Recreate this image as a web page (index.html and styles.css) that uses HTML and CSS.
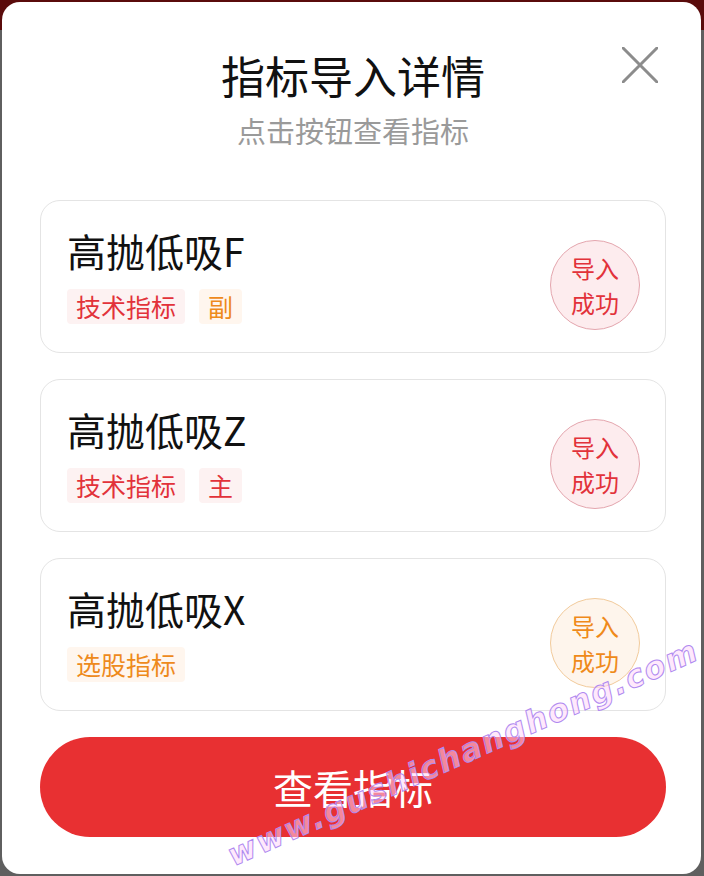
FILE: index.html
```html
<!DOCTYPE html>
<html lang="zh-CN">
<head>
  <meta charset="UTF-8" />
  <meta name="viewport" content="width=device-width, initial-scale=1.0"/>
  <title>指标导入详情</title>
  <link rel="stylesheet" href="styles.css">
</head>
<body>

  <div class="dialog">
    <button class="close" aria-label="关闭">
      <svg width="36" height="36" viewBox="0 0 36 36">
        <path d="M1 1 L35 35 M35 1 L1 35" stroke="#8c8c8c" stroke-width="3" stroke-linecap="round" fill="none"/>
      </svg>
    </button>

    <h1 class="title">指标导入详情</h1>
    <p class="subtitle">点击按钮查看指标</p>

    <!-- imported indicators -->
    <div class="list">
      <div class="card">
        <div class="info">
          <div class="name">高抛低吸F</div>
          <div class="tags">
            <span class="tag red">技术指标</span>
            <span class="tag orange">副</span>
          </div>
        </div>
        <div class="badge red">导入<br>成功</div>
      </div>

      <div class="card">
        <div class="info">
          <div class="name">高抛低吸Z</div>
          <div class="tags">
            <span class="tag red">技术指标</span>
            <span class="tag red">主</span>
          </div>
        </div>
        <div class="badge red">导入<br>成功</div>
      </div>

      <div class="card">
        <div class="info">
          <div class="name">高抛低吸X</div>
          <div class="tags">
            <span class="tag orange">选股指标</span>
          </div>
        </div>
        <div class="badge orange">导入<br>成功</div>
      </div>
    </div>

    <button class="view">查看指标</button>

    <span class="mark">www.gushichanghong.com</span>
  </div>

</body>
</html>
```

FILE: styles.css
```css
body {
  margin: 0;
  padding: 2px 3px 2px 2px;
  background: linear-gradient(#5a0b0b 0, #5a0b0b 30px, #5f5f5f 30px);
  font-family: "Noto Sans CJK SC", "Noto Sans", sans-serif;
}
.dialog {
  position: relative;
  box-sizing: border-box;
  height: 872px;
  background: #fff;
  border-radius: 18px;
  padding: 46px 35px 37px 38px;
}
.close {
  position: absolute;
  top: 45px;
  right: 43px;
  width: 36px;
  height: 36px;
  padding: 0;
  border: none;
  background: none;
}
.close svg {
  display: block;
}
.title {
  margin: 0;
  text-align: center;
  font-size: 44px;
  line-height: 54px;
  font-weight: 400;
  color: #111;
}
.subtitle {
  margin: 8px 0 50px;
  text-align: center;
  font-size: 29px;
  line-height: 40px;
  color: #9a9a9a;
}
.list {
  display: flex;
  flex-direction: column;
  gap: 26px;
}
.card {
  display: flex;
  justify-content: space-between;
  align-items: flex-start;
  height: 153px;
  box-sizing: border-box;
  padding: 25px 25px 0 26px;
  border: 1px solid #e4e4e4;
  border-radius: 20px;
}
.name {
  font-size: 39px;
  line-height: 48px;
  color: #111;
}
.tags {
  display: flex;
  gap: 14px;
  margin-top: 15px;
}
.tag {
  font-size: 25px;
  line-height: 35px;
  padding: 0 9px;
  border-radius: 4px;
}
.tag.red {
  color: #e2323a;
  background: #fdf2f2;
}
.tag.orange {
  color: #ee8a1c;
  background: #fff6ee;
}
.badge {
  width: 90px;
  height: 90px;
  margin-top: 14px;
  box-sizing: border-box;
  border-radius: 50%;
  display: flex;
  align-items: center;
  justify-content: center;
  text-align: center;
  font-size: 24px;
  line-height: 35px;
}
.badge.red {
  color: #e2323a;
  background: #fdecee;
  border: 1px solid #e4a6ae;
}
.badge.orange {
  color: #ef8a1a;
  background: #fef5ec;
  border: 1px solid #f2cb9c;
}
.view {
  display: block;
  width: 100%;
  height: 100px;
  margin-top: 26px;
  border: none;
  border-radius: 50px;
  background: #e83032;
  color: #fff;
  font-family: inherit;
  font-size: 40px;
}
/* site watermark stamped across the lower corner */
.mark {
  position: absolute;
  left: 234px;
  top: 836px;
  transform-origin: left bottom;
  transform: rotate(-24deg);
  font-family: "DejaVu Sans", sans-serif;
  font-size: 31px;
  line-height: 34px;
  font-weight: bold;
  font-style: italic;
  letter-spacing: 2px;
  white-space: nowrap;
  color: rgba(255, 215, 250, 0.55);
  -webkit-text-stroke: 1px #b08af0;
  pointer-events: none;
}
```
